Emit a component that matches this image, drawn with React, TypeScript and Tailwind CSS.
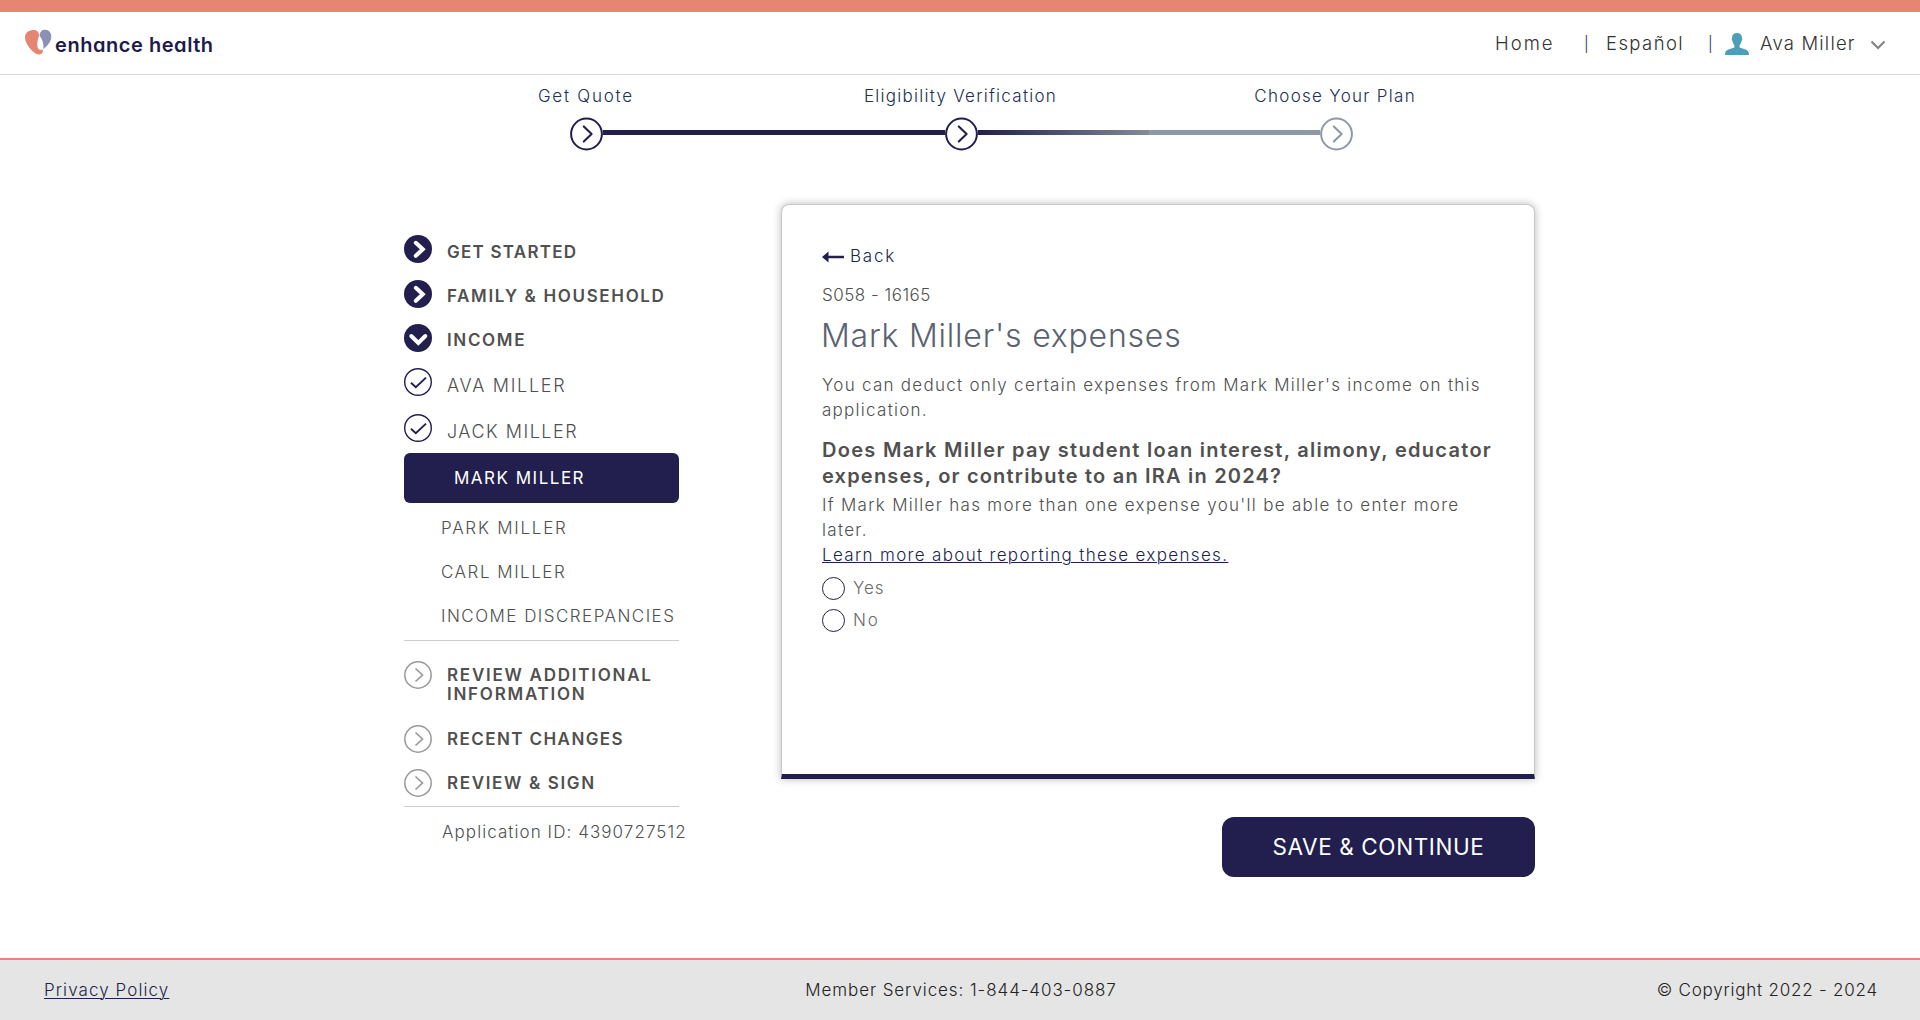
import React from 'react'
import clsx from 'clsx'

function Logo() {
  return (
    <div className="flex items-start">
      <svg width="28" height="27" viewBox="0 0 28 27">
        <path d="M7.6 1.2C11.6.4 14.9 2 15.2 6.6C13.6 10 12.8 15 13.6 18.2C14.4 20.8 16.6 21.4 18.6 20.4C19.6 23.4 18 25.8 14.6 25.4C10 24.8 3.6 18 1.6 12C-.2 6.2 2 2.2 7.6 1.2Z" fill="#e68572" />
        <path d="M20.6.8C25.4.8 27.8 4.2 27.2 9C26.6 13.4 22.6 17.4 19.4 20.2C20 15.4 18.6 10.6 15.6 6.8C15.8 3.2 17.6.8 20.6.8Z" fill="#8a91b5" />
      </svg>
      <span className="mt-[4px] ml-[3px] text-[20px] leading-[24px] font-semibold tracking-[0.55px] text-[#1d1b4c] [font-feature-settings:'cv11']">
        enhance health
      </span>
    </div>
  )
}

function Header() {
  return (
    <header className="h-[75px] border-t-12 border-b border-t-[#e68572] border-b-[#d6d6d8] bg-white">
      <div className="flex h-[62px] items-start justify-between pt-[17px] pr-[34px] pl-[24px]">
        <Logo />
        <nav className="flex h-[30px] items-center text-[18.5px] font-light whitespace-nowrap text-[#333]">
          <a className="w-[89px] tracking-[2px]">Home</a>
          <span className="w-[22px] text-[15px] text-[#221f4e]">|</span>
          <a className="w-[102px] tracking-[1.4px]">Español</a>
          <span className="w-[17px] text-[15px] text-[#221f4e]">|</span>
          <svg width="24" height="22" viewBox="0 0 24 22" className="mr-[11px]">
            <path d="M12 0C15.4 0 17 2 17 5.2C17.6 5.8 17.2 7.6 16.4 8.2C16 10 15.4 11.2 14.6 12.2V14.4L20.5 16.4C23 17.4 24 18.6 24 22H0C0 18.6 1 17.4 3.5 16.4L9.4 14.4V12.2C8.6 11.2 8 10 7.6 8.2C6.8 7.6 6.4 5.8 7 5.2C7 2 8.6 0 12 0Z" fill="#4a9fb9" />
          </svg>
          <span className="w-[110px] tracking-[1.2px]">Ava Miller</span>
          <svg width="16" height="10" viewBox="0 0 16 10" className="mt-[2px]">
            <path d="M1.5 1.5L8 8L14.5 1.5" fill="none" stroke="#828282" strokeWidth="2" />
          </svg>
        </nav>
      </div>
    </header>
  )
}

function StepCircle({ muted }: { muted?: boolean }) {
  return (
    <svg width="33" height="34" viewBox="0 0 33 34" className={clsx('shrink-0', muted ? 'text-[#8f98a4]' : 'text-[#221f4e]')}>
      <circle cx="16.5" cy="17" r="15.4" fill="#fff" stroke="currentColor" strokeWidth="2" />
      <path d="M13.8 9.4L21.6 17L13.8 24.6" fill="none" stroke="currentColor" strokeWidth="2.1" strokeLinecap="round" strokeLinejoin="round" />
    </svg>
  )
}

function Stepper() {
  return (
    <div className="mx-auto w-[1125px] pt-[9px] pl-px">
      <div className="grid grid-cols-3 text-center text-[17px] leading-[24px] font-light whitespace-nowrap text-[#22304e]">
        <span className="tracking-[1.75px]">Get Quote</span>
        <span className="tracking-[1.27px]">Eligibility Verification</span>
        <span className="tracking-[1.3px]">Choose Your Plan</span>
      </div>
      <div className="mt-[9px] flex items-center pr-[170px] pl-[171px]">
        <StepCircle />
        <div className="mb-[3px] h-[5px] flex-1 bg-[#221f4e]" />
        <StepCircle />
        <div className="mb-[3px] flex h-[5px] flex-1">
          <div className="flex-1 bg-linear-to-r from-[#221f4e] to-[#858c96]" />
          <div className="flex-1 bg-[#8f98a4]" />
        </div>
        <StepCircle muted />
      </div>
    </div>
  )
}

type IconKind = 'right' | 'down' | 'check' | 'todo'

function NavIcon({ kind }: { kind: IconKind }) {
  return (
    <svg width="28" height="28" viewBox="0 0 28 28" className="shrink-0">
      {(kind === 'right' || kind === 'down') && <circle cx="14" cy="14" r="14" fill="#221f4e" />}
      {kind === 'right' && <path d="M11.8 7.8L18.8 14.3L11.8 20.8" fill="none" stroke="#fff" strokeWidth="4" strokeLinecap="round" />}
      {kind === 'down' && <path d="M7.3 12L14.3 19L21.3 12" fill="none" stroke="#fff" strokeWidth="4" strokeLinecap="round" />}
      {kind === 'check' && (
        <g fill="none" stroke="#221f4e">
          <circle cx="14" cy="14" r="13.3" strokeWidth="1.4" />
          <path d="M7 14.8L11.8 19.2L22 9.6" strokeWidth="1.9" />
        </g>
      )}
      {kind === 'todo' && (
        <g fill="none" stroke="#999">
          <circle cx="14" cy="14" r="13.2" strokeWidth="1.5" />
          <path d="M11.5 7.5L18.5 14L11.5 20.5" strokeWidth="1.7" />
        </g>
      )}
    </svg>
  )
}

function NavRow({ icon, row, text, children }: { icon: IconKind; row: string; text: string; children: React.ReactNode }) {
  return (
    <li className={clsx('flex items-start', row)}>
      <NavIcon kind={icon} />
      <span className={clsx('ml-[15px] whitespace-nowrap text-[#505050]', text)}>{children}</span>
    </li>
  )
}

function Sidebar() {
  return (
    <aside className="w-[275px] pt-[84px]">
      <ul className="text-[17px] leading-[28px]">
        <NavRow icon="right" row="h-[45px]" text="pt-[3px] font-semibold tracking-[1.25px]">GET STARTED</NavRow>
        <NavRow icon="right" row="h-[44px]" text="pt-[2px] font-semibold tracking-[1.65px]">FAMILY &amp; HOUSEHOLD</NavRow>
        <NavRow icon="down" row="h-[44px]" text="pt-[2px] font-semibold tracking-[1.65px]">INCOME</NavRow>
        <NavRow icon="check" row="h-[46px]" text="pt-[4px] text-[18px] font-light tracking-[1.7px]">AVA MILLER</NavRow>
        <NavRow icon="check" row="h-[39px]" text="pt-[4px] text-[18px] font-light tracking-[1.5px]">JACK MILLER</NavRow>
        <li className="mb-[3px] flex h-[50px] items-center rounded-md bg-[#221f4e] pl-[50px] tracking-[1.5px] text-white">MARK MILLER</li>
        <li className="h-[44px] pt-[8px] pl-[37px] font-light tracking-[1.75px] text-[#505050]">PARK MILLER</li>
        <li className="h-[44px] pt-[8px] pl-[37px] font-light tracking-[1.52px] text-[#505050]">CARL MILLER</li>
        <li className="h-[46px] pt-[8px] pl-[37px] font-light tracking-[1.47px] whitespace-nowrap text-[#505050]">INCOME DISCREPANCIES</li>
      </ul>
      <ul className="border-y border-[#ccc] pt-[20px] text-[17px] leading-[28px]">
        <NavRow icon="todo" row="h-[64px]" text="pt-[5px] leading-[19px] font-semibold tracking-[1.75px]">
          REVIEW ADDITIONAL
          <br />
          INFORMATION
        </NavRow>
        <NavRow icon="todo" row="h-[44px]" text="font-semibold tracking-[1.42px]">RECENT CHANGES</NavRow>
        <NavRow icon="todo" row="h-[37px]" text="font-semibold tracking-[1.65px]">REVIEW &amp; SIGN</NavRow>
      </ul>
      <p className="mt-[11px] ml-[38px] text-[17px] leading-[28px] font-light tracking-[1.07px] whitespace-nowrap text-[#505050]">Application ID: 4390727512</p>
    </aside>
  )
}

function Radio({ label, track }: { label: string; track: string }) {
  return (
    <label className="flex items-center">
      <span className="size-[23px] rounded-full border border-[#221f4e]" />
      <span className={clsx('ml-[8px] leading-[23px] text-[#6b6b6b]', track)}>{label}</span>
    </label>
  )
}

function ExpenseCard() {
  return (
    <section className="h-[575px] rounded-t-lg border border-b-5 border-[#c8c8c8] border-b-[#221f4e] bg-white pt-[39px] pl-[40px] text-[17px] leading-[25px] font-light whitespace-nowrap text-[#505050] shadow-[0_0_8px_rgba(0,0,0,0.28)]">
      <a className="flex items-center tracking-[1.75px] text-[#221f4e]">
        <svg width="22" height="12" viewBox="0 0 22 12" className="mr-[6px]">
          <path d="M0 6L6.5 .5V4.800H22V7.200H6.500V11.500Z" fill="#221f4e" />
        </svg>
        Back
      </a>
      <p className="mt-[14px] tracking-[0.5px]">S058 - 16165</p>
      <h1 className="mt-[8px] -ml-px text-[32px] leading-[40px] tracking-[0.78px] text-[#5b6270]">Mark Miller's expenses</h1>
      <p className="mt-[17px] tracking-[1.27px]">
        You can deduct only certain expenses from Mark Miller's income on this
        <br />
        application.
      </p>
      <h2 className="mt-[14px] text-[20px] leading-[26px] font-semibold text-[#505050]">
        <span className="tracking-[1.29px]">Does Mark Miller pay student loan interest, alimony, educator</span>
        <br />
        <span className="tracking-[1.2px]">expenses, or contribute to an IRA in 2024?</span>
      </h2>
      <p className="mt-[4px] tracking-[1.3px]">
        If Mark Miller has more than one expense you'll be able to enter more
        <br />
        later.
      </p>
      <a className="tracking-[1.33px] text-[#221f4e] underline decoration-1 underline-offset-[1px]">Learn more about reporting these expenses.</a>
      <div className="mt-[9px] flex flex-col gap-[9px]">
        <Radio label="Yes" track="tracking-[0.9px]" />
        <Radio label="No" track="tracking-[1.8px]" />
      </div>
    </section>
  )
}

function Footer() {
  return (
    <footer className="mt-auto grid h-[62px] grid-cols-3 items-center border-t-2 border-[#e68572] bg-[#e5e5e5] pr-[42px] pb-px pl-[44px] text-[17px] leading-[24px] font-light whitespace-nowrap text-[#222]">
      <a className="tracking-[1.08px] text-[#221f4e] underline decoration-1 underline-offset-[2px]">Privacy Policy</a>
      <span className="text-center tracking-[0.92px]">Member Services: 1-844-403-0887</span>
      <span className="text-right tracking-[0.78px]">© Copyright 2022 - 2024</span>
    </footer>
  )
}

export default function App() {
  return (
    <div className="flex h-[1020px] flex-col bg-white font-['Inter',sans-serif]">
      <Header />
      <Stepper />
      <main className="flex items-start pl-[404px]">
        <Sidebar />
        <div className="mt-[53px] ml-[102px] flex w-[754px] flex-col">
          <ExpenseCard />
          <button className="mt-[38px] h-[60px] w-[313px] self-end rounded-xl bg-[#221f4e] text-[22.5px] tracking-[0.6px] whitespace-nowrap text-white">
            SAVE &amp; CONTINUE
          </button>
        </div>
      </main>
      <Footer />
    </div>
  )
}
